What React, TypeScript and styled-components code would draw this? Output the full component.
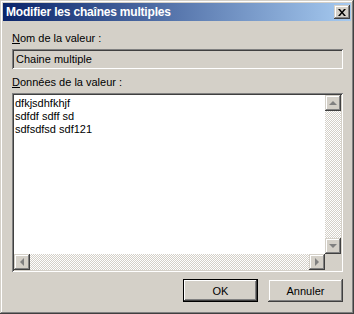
import styled, { createGlobalStyle } from 'styled-components';

const GlobalStyle = createGlobalStyle`
    html, body {
        margin: 0;
        padding: 0;
        background: #d4d0c8;
    }
    body {
        font-family: "Liberation Sans", Arial, sans-serif;
        font-size: 11px;
    }
`

const face = '#d4d0c8';

// raised 3d edge, classic style
const raised = `
    box-shadow: inset -1px -1px 0 #404040, inset 1px 1px 0 ${face}, inset -2px -2px 0 #808080, inset 2px 2px 0 #ffffff;
`
const sunken = `
    box-shadow: inset 1px 1px 0 #808080, inset -1px -1px 0 #ffffff, inset 2px 2px 0 #404040, inset -2px -2px 0 ${face};
`

const Window = styled.div`
    width: 354px;
    height: 314px;
    box-sizing: border-box;
    background: ${face};
    padding: 3px;
    ${raised}
    display: flex;
    flex-direction: column;
`

const TitleBar = styled.div`
    height: 18px;
    background: linear-gradient(to right, #0a246a, #a6caf0);
    display: flex;
    align-items: center;
    justify-content: space-between;
    padding: 0 1px 0 3px;
`

const Title = styled.span`
    color: #fff;
    font-weight: bold;
    font-size: 12px;
    letter-spacing: -0.2px;
`

const CloseButton = styled.div`
    width: 16px;
    height: 14px;
    background: ${face};
    ${raised}
    display: flex;
    align-items: center;
    justify-content: center;
`

const Body = styled.div`
    flex: 1;
    display: flex;
    flex-direction: column;
    padding: 11px 8px 0 9px;
`

const Label = styled.div`
    color: #000;
    height: 13px;
    line-height: 13px;
    margin-bottom: 4px;
    u { text-decoration: underline; }
`

const ReadOnlyBox = styled.div`
    height: 20px;
    box-sizing: border-box;
    padding: 3px 4px;
    line-height: 14px;
    background: ${face};
    ${sunken}
    margin-bottom: 7px;
`

const TextArea = styled.div`
    height: 179px;
    box-sizing: border-box;
    background: #fff;
    padding: 2px;
    ${sunken}
    display: grid;
    grid-template-columns: 1fr 16px;
    grid-template-rows: 1fr 16px;
`

const Lines = styled.div`
    padding: 2px 1px;
    line-height: 13px;
    color: #000;
`

const VTrack = styled.div`
    display: flex;
    flex-direction: column;
    justify-content: space-between;
    background-color: #fff;
    background-image: repeating-conic-gradient(${face} 0 25%, #fff 0 50%);
    background-size: 2px 2px;
`

const HTrack = styled(VTrack)`
    flex-direction: row;
`

const Corner = styled.div`
    background: ${face};
`

const ScrollButton = styled.div`
    width: 16px;
    height: 16px;
    box-sizing: border-box;
    background: ${face};
    ${raised}
    display: flex;
    align-items: center;
    justify-content: center;
`

const Arrow = styled.div<{ dir: 'up' | 'down' | 'left' | 'right' }>`
    width: 0;
    height: 0;
    border: 4px solid transparent;
    ${p => p.dir === 'up' && `border-bottom-color: #808080; border-top-width: 0; margin-top: -1px;`}
    ${p => p.dir === 'down' && `border-top-color: #808080; border-bottom-width: 0;`}
    ${p => p.dir === 'left' && `border-right-color: #808080; border-left-width: 0;`}
    ${p => p.dir === 'right' && `border-left-color: #808080; border-right-width: 0;`}
`

const ButtonRow = styled.div`
    display: flex;
    justify-content: flex-end;
    gap: 10px;
    margin-top: 7px;
`

const Button = styled.div<{ primary?: boolean }>`
    width: 75px;
    height: 23px;
    box-sizing: border-box;
    display: flex;
    align-items: center;
    justify-content: center;
    color: #000;
    background: ${face};
    ${p => p.primary
        ? `border: 1px solid #000; box-shadow: inset -1px -1px 0 #404040, inset 1px 1px 0 #ffffff, inset -2px -2px 0 #808080;`
        : raised}
`

function App() {
    return (
        <>
            <GlobalStyle/>
            <Window>
                <TitleBar>
                    <Title>Modifier les chaînes multiples</Title>
                    <CloseButton>
                        <svg width="8" height="7" viewBox="0 0 8 7">
                            <path d="M0 0h2l2 2.5L6 0h2L5 3.5 8 7H6L4 4.5 2 7H0l3-3.5z" fill="#000"/>
                        </svg>
                    </CloseButton>
                </TitleBar>
                <Body>
                    <Label><u>N</u>om de la valeur :</Label>
                    <ReadOnlyBox>Chaine multiple</ReadOnlyBox>
                    <Label><u>D</u>onnées de la valeur :</Label>
                    <TextArea>
                        <Lines>
                            dfkjsdhfkhjf<br/>
                            sdfdf sdff sd<br/>
                            sdfsdfsd sdf121
                        </Lines>
                        <VTrack>
                            <ScrollButton><Arrow dir="up"/></ScrollButton>
                            <ScrollButton><Arrow dir="down"/></ScrollButton>
                        </VTrack>
                        <HTrack>
                            <ScrollButton><Arrow dir="left"/></ScrollButton>
                            <ScrollButton><Arrow dir="right"/></ScrollButton>
                        </HTrack>
                        <Corner/>
                    </TextArea>
                    <ButtonRow>
                        <Button primary>OK</Button>
                        <Button>Annuler</Button>
                    </ButtonRow>
                </Body>
            </Window>
        </>
    )
}

export default App
